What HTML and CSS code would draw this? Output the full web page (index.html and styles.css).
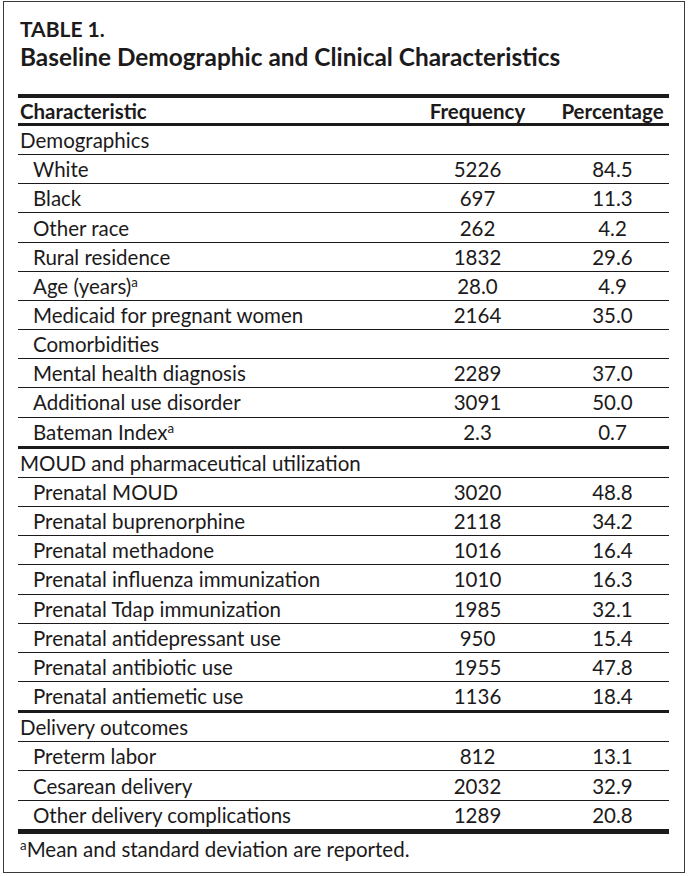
FILE: index.html
```html
<!DOCTYPE html>
<html lang="en">
<head>
<meta charset="utf-8">
<title>Table 1</title>
<link rel="stylesheet" href="styles.css">
</head>
<body>
<div class="frame">
  <div class="caption">
    <div class="label">TABLE 1.</div>
    <div class="title">Baseline Demographic and Clinical Characteristics</div>
  </div>
  <table class="data">
    <colgroup>
      <col class="c1"><col class="c2"><col class="c3">
    </colgroup>
    <thead>
      <tr><th class="name">Characteristic</th><th>Frequency</th><th>Percentage</th></tr>
    </thead>
    <tbody>
      <tr class="sec"><td>Demographics</td><td></td><td></td></tr>
      <tr><td class="ind">White</td><td>5226</td><td>84.5</td></tr>
      <tr><td class="ind">Black</td><td>697</td><td>11.3</td></tr>
      <tr><td class="ind">Other race</td><td>262</td><td>4.2</td></tr>
      <tr><td class="ind">Rural residence</td><td>1832</td><td>29.6</td></tr>
      <tr><td class="ind">Age (years)<sup>a</sup></td><td>28.0</td><td>4.9</td></tr>
      <tr><td class="ind">Medicaid for pregnant women</td><td>2164</td><td>35.0</td></tr>
      <tr><td class="ind">Comorbidities</td><td></td><td></td></tr>
      <tr><td class="ind">Mental health diagnosis</td><td>2289</td><td>37.0</td></tr>
      <tr><td class="ind">Additional use disorder</td><td>3091</td><td>50.0</td></tr>
      <tr class="end"><td class="ind">Bateman Index<sup>a</sup></td><td>2.3</td><td>0.7</td></tr>
      <tr class="sec"><td>MOUD and pharmaceutical utilization</td><td></td><td></td></tr>
      <tr><td class="ind">Prenatal MOUD</td><td>3020</td><td>48.8</td></tr>
      <tr><td class="ind">Prenatal buprenorphine</td><td>2118</td><td>34.2</td></tr>
      <tr><td class="ind">Prenatal methadone</td><td>1016</td><td>16.4</td></tr>
      <tr><td class="ind">Prenatal influenza immunization</td><td>1010</td><td>16.3</td></tr>
      <tr><td class="ind">Prenatal Tdap immunization</td><td>1985</td><td>32.1</td></tr>
      <tr><td class="ind">Prenatal antidepressant use</td><td>950</td><td>15.4</td></tr>
      <tr><td class="ind">Prenatal antibiotic use</td><td>1955</td><td>47.8</td></tr>
      <tr class="end"><td class="ind">Prenatal antiemetic use</td><td>1136</td><td>18.4</td></tr>
      <tr class="sec"><td>Delivery outcomes</td><td></td><td></td></tr>
      <tr><td class="ind">Preterm labor</td><td>812</td><td>13.1</td></tr>
      <tr><td class="ind">Cesarean delivery</td><td>2032</td><td>32.9</td></tr>
      <tr class="last"><td class="ind">Other delivery complications</td><td>1289</td><td>20.8</td></tr>
    </tbody>
  </table>
  <p class="note"><sup>a</sup>Mean and standard deviation are reported.</p>
</div>
</body>
</html>
```

FILE: styles.css
```css
html, body {
  margin: 0;
  padding: 0;
  background: #ffffff;
}

body {
  color: #1c1a1b;
  font-family: "Lato", "Open Sans", sans-serif;
}

.frame {
  box-sizing: border-box;
  width: 682px;
  height: 872px;
  margin: 1px 0 0 3px;
  border: 1px solid #3a3a3a;
  padding: 0 14px;
}

.caption {
  padding-top: 14px;
  padding-left: 2px;
}

.label {
  font-weight: 700;
  font-size: 21px;
  line-height: 25px;
}

.title {
  font-weight: 700;
  font-size: 24.4px;
  line-height: 32px;
}

.data {
  width: 651px;
  margin-top: 21px;
  border-collapse: collapse;
  border-top: 4px solid #1c1a1b;
}

.c1 { width: 381px; }
.c2 { width: 157px; }
.c3 { width: 113px; }

.data th {
  font-weight: 700;
  font-size: 20.5px;
  height: 25px;
  padding: 0 2px;
  text-align: center;
  border-bottom: 3px solid #1c1a1b;
}

.data th.name {
  text-align: left;
}

.data td {
  font-size: 20.5px;
  height: 28.17px;
  padding: 0 2px;
  text-align: center;
  border-bottom: 1px solid #1c1a1b;
  white-space: nowrap;
}

.data td:first-child {
  text-align: left;
}

.data td.ind {
  padding-left: 15px;
}

.data tr.end td {
  border-bottom: 3px solid #1c1a1b;
}

.data tr.last td {
  border-bottom: 5px solid #1c1a1b;
}

sup {
  font-size: 0.65em;
  vertical-align: 0.5em;
  line-height: 0;
}

.note {
  margin: 2px 0 0;
  padding-left: 2px;
  font-size: 20.5px;
  line-height: 26px;
}
```
